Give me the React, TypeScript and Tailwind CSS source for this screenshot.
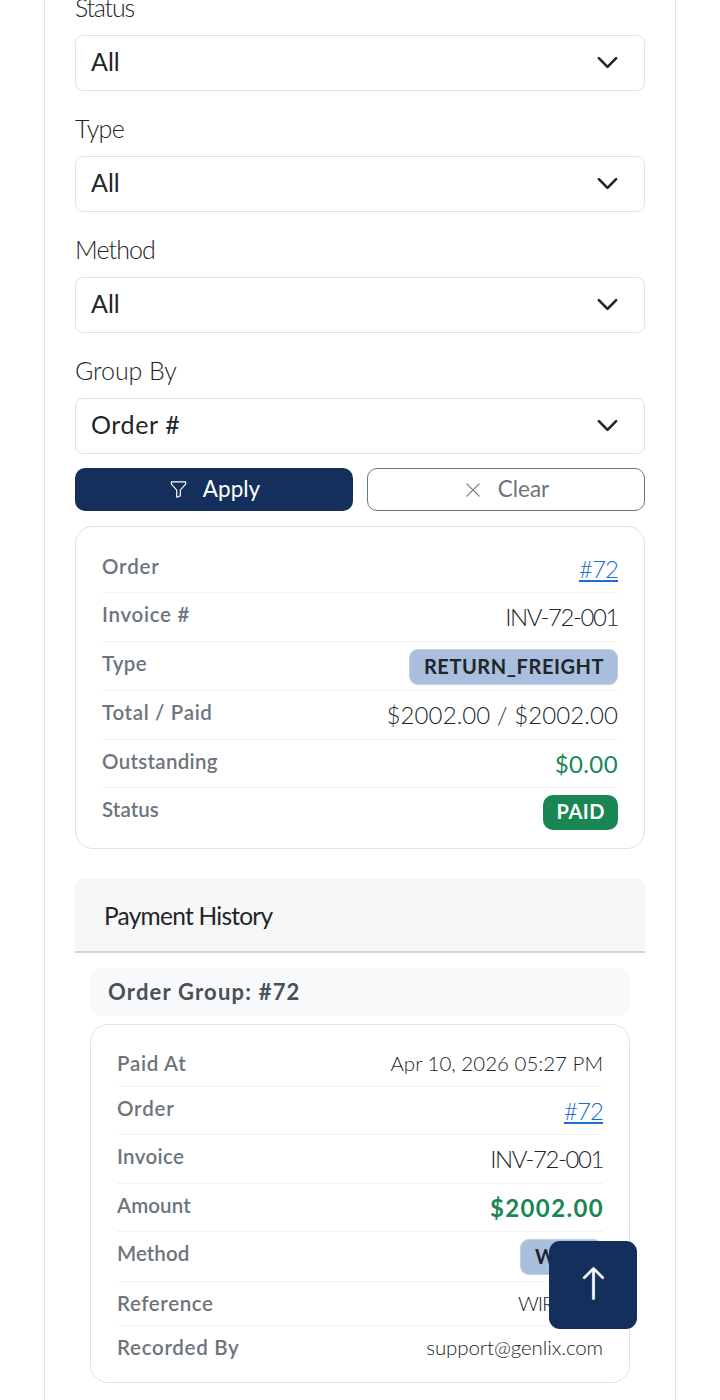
import type { ReactNode } from "react";
import clsx from "clsx";
import { BsArrowUp, BsFunnel, BsXLg } from "react-icons/bs";

const filters = [
  { label: "Status", value: "All", labelClass: "tracking-[-1.25px]", valueClass: "" },
  { label: "Type", value: "All", labelClass: "tracking-[-0.6px]", valueClass: "" },
  { label: "Method", value: "All", labelClass: "tracking-[-0.9px]", valueClass: "" },
  { label: "Group By", value: "Order #", labelClass: "tracking-[-0.1px]", valueClass: "tracking-[0.6px]" },
];

function SelectField({ label, value, labelClass, valueClass }: (typeof filters)[number]) {
  return (
    <div>
      <label className="flex h-[52px] items-center pb-[3px] text-[25px] font-light text-[#212529]">
        <span className={labelClass}>{label}</span>
      </label>
      <button className="flex h-[55.5px] w-full items-center justify-between rounded-[8px] border border-[#dee2e6] bg-white pl-[15px] pr-[25.5px] pb-[2px] text-[25px] text-[#212529]">
        <span className={valueClass}>{value}</span>
        <svg viewBox="0 0 16 16" className="mt-[2px] size-[23px]" fill="none" stroke="#212529" strokeWidth="1.8">
          <path strokeLinecap="round" strokeLinejoin="round" d="m2 5 6 6 6-6" />
        </svg>
      </button>
    </div>
  );
}

function Row({
  label,
  labelClass,
  last,
  children,
}: {
  label: string;
  labelClass?: string;
  last?: boolean;
  children: ReactNode;
}) {
  return (
    <div
      className={clsx(
        "flex items-start justify-between pt-[7px]",
        !last && "border-b border-[#f0f1f2] pb-[7.5px]"
      )}
    >
      <span className={clsx("text-[20.5px] leading-[28.6px] font-semibold text-[#6c757d]", labelClass)}>
        {label}
      </span>
      {children}
    </div>
  );
}

function Value({ className, small, children }: { className?: string; small?: boolean; children: ReactNode }) {
  return (
    <span
      className={clsx(
        small ? "text-[20.5px] leading-[29px]" : "text-[24px] leading-[33px]",
        className ?? "font-light text-[#212529]"
      )}
    >
      {children}
    </span>
  );
}

function OrderLink() {
  return (
    <Value className="font-light tracking-[-0.9px] text-[#1a6fd0] underline decoration-[1.6px] underline-offset-2">
      #72
    </Value>
  );
}

function TypeBadge({ className, children }: { className: string; children: ReactNode }) {
  return (
    <span
      className={clsx(
        "-mb-[2px] flex h-[36px] items-center rounded-[9px] border border-[#bccde4] bg-[#a8bfdd] pl-[14px] pb-[2px] text-[20px] font-bold text-[#212529]",
        className
      )}
    >
      {children}
    </span>
  );
}

export default function App() {
  return (
    <div className="h-[1400px] overflow-hidden bg-white font-['Lato','Liberation_Sans',sans-serif]">
      <div className="mx-11 flex h-full flex-col border-x border-[#dee2e6] px-[30px]">
        {/* Filters */}
        <div className="-mt-[17px] flex flex-col gap-[13.5px]">
          {filters.map((f) => (
            <SelectField key={f.label} {...f} />
          ))}
        </div>

        <div className="mt-[14.5px] grid grid-cols-2 gap-[14px]">
          <button className="flex h-[43px] items-center justify-center rounded-[10px] bg-[#142f5b] pl-px text-[22.5px] text-white">
            <BsFunnel className="mr-[15px] size-[19px]" />
            <span className="pb-[2px]">Apply</span>
          </button>
          <button className="flex h-[43px] items-center justify-center rounded-[10px] border border-[#6c757d] pl-px text-[22.5px] text-[#6c757d]">
            <BsXLg className="mr-4 size-[18px]" />
            <span className="pb-[2px]">Clear</span>
          </button>
        </div>

        {/* Invoice summary */}
        <div className="mt-[15px] rounded-[18px] border border-[#dee2e6] px-[26px] pt-[17.7px] pb-[17.5px]">
          <Row label="Order" labelClass="tracking-[0.8px]">
            <OrderLink />
          </Row>
          <Row label="Invoice #" labelClass="tracking-[0.7px]">
            <Value className="font-light tracking-[-1.4px] text-[#212529]">INV-72-001</Value>
          </Row>
          <Row label="Type" labelClass="tracking-[0.3px]">
            <TypeBadge className="pr-[13px] tracking-[0.55px]">RETURN_FREIGHT</TypeBadge>
          </Row>
          <Row label="Total / Paid" labelClass="tracking-[0.65px]">
            <Value className="font-light tracking-[0.1px] text-[#212529]">$2002.00 / $2002.00</Value>
          </Row>
          <Row label="Outstanding" labelClass="tracking-[0.3px]">
            <Value className="tracking-[0.4px] text-[#198754]">$0.00</Value>
          </Row>
          <Row label="Status" labelClass="tracking-[0.1px]" last>
            <span className="-mt-[0.6px] mb-[0.6px] flex h-[35px] items-center rounded-[10px] bg-[#198754] pr-[13px] pb-[2px] pl-[14px] text-[20px] font-bold tracking-[0.5px] text-white">
              PAID
            </span>
          </Row>
        </div>

        {/* Payment history */}
        <div className="mt-[30px] flex h-[74px] shrink-0 items-center rounded-t-[8px] border-b-2 border-[#d5d6d7] bg-[#f7f7f7] pt-[3px] pl-[29px] text-[24.5px] text-[#212529]">
          <span className="tracking-[-0.75px]">Payment History</span>
        </div>
        <div className="px-[15px] pt-[15px]">
          <div className="flex h-12 items-center rounded-[14px] bg-[#f8f9fa] pb-px pl-[18px] text-[22px] font-bold text-[#495057]">
            <span className="tracking-[1.2px]">Order Group: #72</span>
          </div>
          <div className="mt-2 rounded-[18px] border border-[#dee2e6] px-[26px] pt-[17.6px] pb-[20px]">
            <Row label="Paid At" labelClass="tracking-[0.7px]">
              <Value small>Apr 10, 2026 05:27 PM</Value>
            </Row>
            <Row label="Order" labelClass="tracking-[0.8px]">
              <OrderLink />
            </Row>
            <Row label="Invoice" labelClass="tracking-[0.35px]">
              <Value className="font-light tracking-[-1.4px] text-[#212529]">INV-72-001</Value>
            </Row>
            <Row label="Amount" labelClass="tracking-[0.1px]">
              <Value className="-mr-px font-bold tracking-[1.35px] text-[#198754]">$2002.00</Value>
            </Row>
            <Row label="Method" labelClass="tracking-[0.05px]">
              <TypeBadge className="pr-[13px] tracking-[0.7px]">WIRE</TypeBadge>
            </Row>
            <Row label="Reference" labelClass="tracking-[0.6px]">
              <Value small className="font-light tracking-[-1.1px] text-[#212529]">WIRE-001</Value>
            </Row>
            <Row label="Recorded By" labelClass="tracking-[0.7px]" last>
              <Value small className="font-light tracking-[-0.1px] text-[#212529]">support@genlix.com</Value>
            </Row>
          </div>
        </div>
      </div>

      {/* Back to top */}
      <button className="fixed top-[1241px] left-[549px] flex size-[88px] items-center justify-center rounded-[11px] bg-[#142f5b] pb-[3px] text-white">
        <BsArrowUp className="size-[37px] stroke-current stroke-[0.25]" />
      </button>
    </div>
  );
}
